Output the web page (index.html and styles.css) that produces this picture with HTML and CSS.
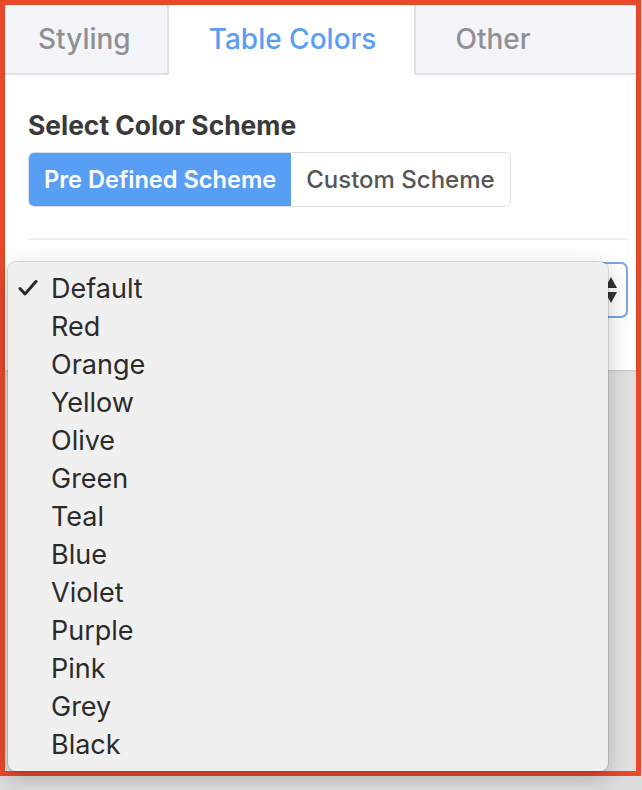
FILE: index.html
```html
<!DOCTYPE html>
<html lang="en">
<head>
<meta charset="utf-8">
<title>Table Colors</title>
<link rel="stylesheet" href="styles.css">
</head>
<body>
<div class="frame">
  <div class="panel">
    <nav class="tabs">
      <div class="tab">Styling</div>
      <div class="tab active">Table Colors</div>
      <div class="tab">Other</div>
      <div class="tab-fill"></div>
    </nav>
    <div class="content">
      <h3 class="label">Select Color Scheme</h3>
      <div class="btn-group">
        <span class="btn on">Pre Defined Scheme</span>
        <span class="btn">Custom Scheme</span>
      </div>
      <hr class="sep">
      <div class="select">
        <span class="select-value">Default</span>
        <svg class="arrows" width="14" height="28" viewBox="0 0 14 28">
          <path d="M7 1 L13 12 L1 12 Z" fill="#333"/>
          <path d="M7 27 L13 16 L1 16 Z" fill="#333"/>
        </svg>
      </div>
    </div>
  </div>
  <ul class="menu">
    <li class="item checked"><span class="check"><svg width="20" height="16" viewBox="0 0 20 16"><path d="M2 8.5 L7 14 L18 1.5" fill="none" stroke="#2a2a2a" stroke-width="3" stroke-linecap="round" stroke-linejoin="round"/></svg></span>Default</li>
    <li class="item"><span class="check"></span>Red</li>
    <li class="item"><span class="check"></span>Orange</li>
    <li class="item"><span class="check"></span>Yellow</li>
    <li class="item"><span class="check"></span>Olive</li>
    <li class="item"><span class="check"></span>Green</li>
    <li class="item"><span class="check"></span>Teal</li>
    <li class="item"><span class="check"></span>Blue</li>
    <li class="item"><span class="check"></span>Violet</li>
    <li class="item"><span class="check"></span>Purple</li>
    <li class="item"><span class="check"></span>Pink</li>
    <li class="item"><span class="check"></span>Grey</li>
    <li class="item"><span class="check"></span>Black</li>
  </ul>
</div>
</body>
</html>
```
FILE: styles.css
```css
* { box-sizing: border-box; }
html, body { margin: 0; padding: 0; }
body {
  background: linear-gradient(#d2d2d2, #dcdcdc);
  width: 642px;
  height: 790px;
  font-family: Inter, Roboto, "Noto Sans", sans-serif;
}
.frame {
  position: relative;
  width: 641px;
  height: 776px;
  border: 5px solid #e9492b;
  background: #e0e0e0;
}
.panel {
  background: #fff;
  height: 365px;
  box-shadow: 0 1px 2px rgba(0,0,0,0.12);
}
.tabs {
  display: flex;
  height: 70px;
  background: #f4f5f9;
}
.tab {
  display: flex;
  align-items: center;
  padding: 0 40px 0 39px;
  font-size: 28px;
  font-weight: 500;
  color: #909094;
  border-bottom: 2px solid #dfe0e6;
}
.tab:first-child { padding: 0 36px 0 33px; border-right: 2px solid #dfe0e6; }
.tab.active {
  background: #fff;
  color: #5a9ef5;
  border-bottom-color: #fff;
  padding: 0 38px 0 40px;
}
.tab.active + .tab { border-left: 2px solid #dfe0e6; }
.tab-fill { flex: 1; border-bottom: 2px solid #dfe0e6; }
.content {
  padding: 35px 8px 0 23px;
}
.label {
  margin: 0;
  font-size: 26.4px;
  line-height: 30px;
  font-weight: 700;
  color: #3a3a3a;
}
.btn-group {
  display: inline-flex;
  margin-top: 12px;
  border: 1px solid #dcdde3;
  border-radius: 6px;
  overflow: hidden;
}
.btn {
  padding: 0 15px;
  height: 53px;
  display: flex;
  align-items: center;
  font-size: 24px;
  font-weight: 500;
  color: #555;
  background: #fff;
}
.btn.on {
  background: #589ef5;
  color: #fff;
  font-weight: 600;
  font-size: 23.6px;
}
.sep {
  margin: 31px 0 0;
  border: 0;
  border-top: 2px solid #efefef;
}
.select {
  margin-top: 22px;
  height: 56px;
  border: 2px solid #74a6e8;
  border-radius: 7px;
  display: flex;
  align-items: center;
  justify-content: space-between;
  padding: 0 8px 0 16px;
  font-size: 22px;
  color: #333;
}
.menu {
  position: absolute;
  left: 3px;
  top: 257px;
  width: 600px;
  height: 509px;
  margin: 0;
  padding: 7px 0;
  list-style: none;
  background: #f0f0f0;
  border-radius: 8px;
  box-shadow: 0 0 0 1px rgba(0,0,0,0.12), 0 6px 22px rgba(0,0,0,0.22);
  font-family: Inter, "Liberation Sans", sans-serif;
  font-size: 27px;
  color: #2b2b2b;
}
.item {
  height: 38px;
  display: flex;
  align-items: center;
  padding-left: 10px;
}
.check {
  width: 33px;
  display: flex;
  align-items: center;
}
```
